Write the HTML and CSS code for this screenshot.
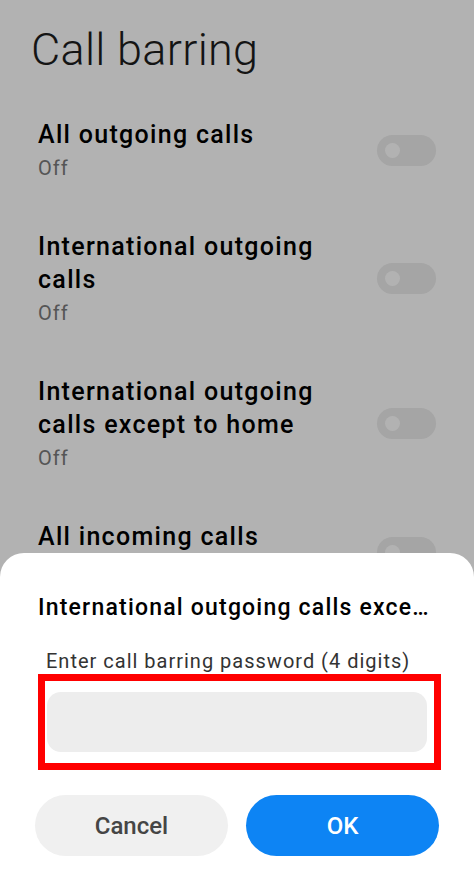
FILE: index.html
```html
<!DOCTYPE HTML>
<html>

<head>
    <meta charset="utf-8">
    <link rel="stylesheet" href="styles.css">
</head>

<body>

    <div class="page">
        <h1 class="page-title">Call barring</h1>

        <ul class="options">
            <li class="option">
                <div class="option-text">
                    <div class="option-name">All outgoing calls</div>
                    <div class="option-state">Off</div>
                </div>
                <span class="switch"></span>
            </li>
            <li class="option">
                <div class="option-text">
                    <div class="option-name">International outgoing calls</div>
                    <div class="option-state">Off</div>
                </div>
                <span class="switch"></span>
            </li>
            <li class="option">
                <div class="option-text">
                    <div class="option-name">International outgoing calls except to home</div>
                    <div class="option-state">Off</div>
                </div>
                <span class="switch"></span>
            </li>
            <li class="option">
                <div class="option-text">
                    <div class="option-name">All incoming calls</div>
                    <div class="option-state">Off</div>
                </div>
                <span class="switch"></span>
            </li>
        </ul>
    </div>

    <div class="scrim"></div>

    <div class="sheet">
        <div class="sheet-title">International outgoing calls except to home</div>
        <label class="sheet-label" for="pwd">Enter call barring password (4 digits)</label>
        <div class="marked">
            <input class="pwd-field" id="pwd" type="password" maxlength="4">
        </div>
        <div class="sheet-buttons">
            <button class="btn btn-cancel">Cancel</button>
            <button class="btn btn-ok">OK</button>
        </div>
    </div>

</body>

</html>
```

FILE: styles.css
```css
/* экран настроек + диалог ввода пароля */

body {
    margin: 0;
    background-color: #fff;
    font-family: Roboto, "Noto Sans", sans-serif;
    color: #000;
}

.page {
    height: 890px;
    overflow: hidden;
}

.page-title {
    margin: 0;
    padding: 22px 0 0 31px;
    font-size: 45px;
    line-height: 56px;
    font-weight: 300;
    letter-spacing: 0.3px;
    color: #1e1e1e;
}

.options {
    list-style: none;
    margin: 16px 0 0;
    padding: 0;
}

.option {
    display: flex;
    align-items: center;
    padding: 24px 38px 24px 38px;
}

.option-text {
    flex: 1;
    padding-right: 40px;
}

.option-name {
    font-size: 25px;
    line-height: 33px;
    font-weight: 500;
    letter-spacing: 1.3px;
}

.option-state {
    margin-top: 3px;
    font-size: 20px;
    line-height: 28px;
    letter-spacing: 1px;
    color: #7a7a7a;
}

.switch {
    width: 59px;
    height: 31px;
    border-radius: 16px;
    background-color: #ececec;
    position: relative;
    flex-shrink: 0;
}

.switch::before {
    content: "";
    position: absolute;
    left: 8px;
    top: 8px;
    width: 15px;
    height: 15px;
    border-radius: 50%;
    background-color: #fff;
}

.scrim {
    position: fixed;
    top: 0;
    left: 0;
    right: 0;
    bottom: 0;
    background-color: rgba(0, 0, 0, 0.3);
}

.sheet {
    position: fixed;
    left: 0;
    right: 0;
    bottom: 0;
    height: 337px;
    box-sizing: border-box;
    padding: 40px 35px 34px 35px;
    background-color: #fff;
    border-radius: 24px 24px 0 0;
}

.sheet-title {
    padding-left: 3px;
    width: 396px;
    font-size: 23px;
    line-height: 30px;
    font-weight: 500;
    letter-spacing: 1.2px;
    white-space: nowrap;
    overflow: hidden;
    text-overflow: ellipsis;
}

.sheet-label {
    display: block;
    margin-top: 25px;
    padding-left: 11px;
    font-size: 20px;
    line-height: 26px;
    letter-spacing: 1px;
    color: #333;
}

.marked {
    margin: 0 -2px 0 3px;
    border: 7px solid #f00;
    padding: 11px 7px 11px 2px;
}

.pwd-field {
    display: block;
    width: 100%;
    height: 60px;
    box-sizing: border-box;
    border: none;
    border-radius: 14px;
    background-color: #ededed;
    outline: none;
}

.sheet-buttons {
    display: flex;
    gap: 18px;
    margin-top: 25px;
}

.btn {
    flex: 1;
    height: 61px;
    border: none;
    border-radius: 31px;
    font-family: Roboto, "Noto Sans", sans-serif;
    font-size: 24px;
    font-weight: 500;
}

.btn-cancel {
    background-color: #f0f0f0;
    color: #454545;
}

.btn-ok {
    background-color: #0d84f4;
    color: #fff;
}
```
